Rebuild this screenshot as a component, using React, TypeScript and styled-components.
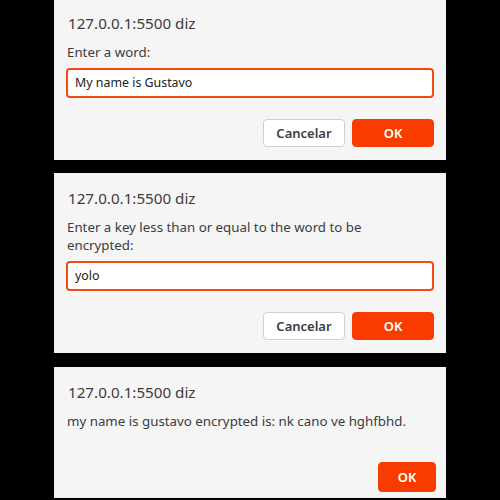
import styled, { createGlobalStyle } from 'styled-components';

const GlobalStyle = createGlobalStyle`
  html, body {
    margin: 0;
    padding: 0;
    background: #000;
    overflow: hidden;
  }
  body {
    font-family: 'Noto Sans', 'DejaVu Sans', sans-serif;
    color: #3c3c3c;
  }
`;

const Page = styled.div`
  width: 500px;
  height: 500px;
  display: flex;
  flex-direction: column;
  align-items: center;
  gap: 13px;
  margin-top: -2px;
`;

const Dialog = styled.div<{ $grow?: boolean }>`
  width: 392px;
  box-sizing: border-box;
  background: #f5f5f5;
  padding: 15px 12px 13px 12px;
  display: flex;
  flex-direction: column;
  flex: ${(p) => (p.$grow ? '1 0 auto' : '0 0 auto')};
  margin-top: ${(p) => (p.$grow ? '1px' : '0')};
`;

const Title = styled.div`
  font-size: 15.2px;
  line-height: 20px;
  padding-left: 2px;
  margin-bottom: 10px;
`;

const Message = styled.div`
  font-size: 13.3px;
  line-height: 18.5px;
  padding-left: 1px;
`;

const Input = styled.input`
  margin-top: 6px;
  height: 30px;
  box-sizing: border-box;
  border: 2px solid #f34a12;
  border-radius: 4px;
  background: #fff;
  padding: 0 7px;
  font-family: inherit;
  font-size: 12.4px;
  color: #222;
  outline: none;
`;

const Actions = styled.div<{ $top: number }>`
  display: flex;
  justify-content: flex-end;
  gap: 7px;
  margin-top: ${(p) => p.$top}px;
`;

const Button = styled.button<{ $primary?: boolean; $w: number; $h?: number }>`
  width: ${(p) => p.$w}px;
  height: ${(p) => p.$h ?? 28}px;
  box-sizing: border-box;
  border-radius: 4px;
  font-family: inherit;
  font-size: 13px;
  font-weight: 600;
  border: 1px solid ${(p) => (p.$primary ? '#f83c00' : '#cfcfcf')};
  background: ${(p) => (p.$primary ? '#f83c00' : '#fff')};
  color: ${(p) => (p.$primary ? '#fff' : '#3c3c3c')};
  padding: 0;
`;

export default function App() {
  return (
    <>
      <GlobalStyle />
      <Page>
        <Dialog>
          <Title>127.0.0.1:5500 diz</Title>
          <Message>Enter a word:</Message>
          <Input defaultValue="My name is Gustavo" />
          <Actions $top={21}>
            <Button $w={82}>Cancelar</Button>
            <Button $primary $w={82}>OK</Button>
          </Actions>
        </Dialog>
        <Dialog>
          <Title>127.0.0.1:5500 diz</Title>
          <Message>
            Enter a key less than or equal to the word to be
            <br />
            encrypted:
          </Message>
          <Input defaultValue="yolo" />
          <Actions $top={21}>
            <Button $w={82}>Cancelar</Button>
            <Button $primary $w={82}>OK</Button>
          </Actions>
        </Dialog>
        <Dialog $grow>
          <Title>127.0.0.1:5500 diz</Title>
          <Message>my name is gustavo encrypted is: nk cano ve hghfbhd.</Message>
          <Actions $top={32} style={{ marginRight: -2 }}>
            <Button $primary $w={58} $h={30}>OK</Button>
          </Actions>
        </Dialog>
      </Page>
    </>
  );
}
